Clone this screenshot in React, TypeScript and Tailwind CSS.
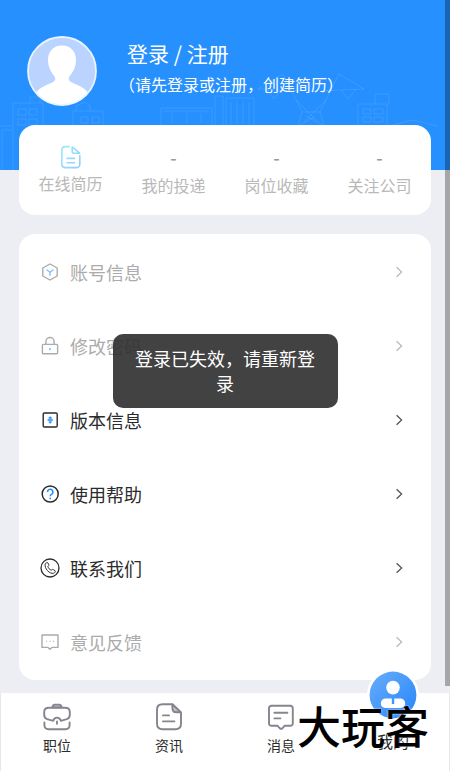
import type { ReactNode } from 'react'
import { clsx } from 'clsx'

interface MenuItem {
  label: string
  icon: ReactNode
  disabled?: boolean
}

interface TabItem {
  label: string
  icon: ReactNode
}

/* ---------- Icons ---------- */

function AccountIcon() {
  return (
    <svg viewBox="0 0 20 20" fill="none" className="w-5 h-5" aria-hidden="true">
      <path d="M10 2 17.2 6V14L10 18 2.8 14V6Z" stroke="currentColor" strokeWidth="1.4" strokeLinejoin="round" />
      <path d="M7 8 10 10.2 13 8M10 10.2V13.2" stroke="#7fbdff" strokeWidth="1.4" strokeLinecap="round" />
    </svg>
  )
}

function LockIcon() {
  return (
    <svg viewBox="0 0 20 20" fill="none" className="w-5 h-5" aria-hidden="true">
      <rect x="2.4" y="8.4" width="15.2" height="9.4" rx="1" stroke="currentColor" strokeWidth="1.4" />
      <path d="M5.9 8.2V5.6a4.1 4.1 0 0 1 8.2 0V8.2" stroke="currentColor" strokeWidth="1.4" />
      <path d="M10 12V14.2" stroke="#7fbdff" strokeWidth="1.6" />
    </svg>
  )
}

function VersionIcon() {
  return (
    <svg viewBox="0 0 20 20" fill="none" className="w-5 h-5" aria-hidden="true">
      <rect x="3.2" y="3" width="14" height="14" rx="1.2" stroke="currentColor" strokeWidth="1.4" />
      <path d="M7.6 10H12.8" stroke="#2690ff" strokeWidth="1.6" />
      <path d="M10.2 6.6V8.8M8.6 8H11.8M10.2 11.2V13.4M8.8 12H11.6" stroke="#2690ff" strokeWidth="1.3" />
    </svg>
  )
}

function HelpIcon() {
  return (
    <svg viewBox="0 0 20 20" fill="none" className="w-5 h-5" aria-hidden="true">
      <circle cx="10.2" cy="10" r="8" stroke="currentColor" strokeWidth="1.5" />
      <path d="M7.5 7.9a2.7 2.7 0 1 1 4.3 2.2C10.8 10.8 10.2 11 10.2 12.2" stroke="#2690ff" strokeWidth="1.6" />
      <circle cx="10.2" cy="14.4" r="0.9" fill="#2690ff" />
    </svg>
  )
}

function PhoneIcon() {
  return (
    <svg viewBox="0 0 20 20" fill="none" className="w-5 h-5" aria-hidden="true">
      <circle cx="10" cy="10" r="9" stroke="currentColor" strokeWidth="1.3" />
      <path
        d="M5.2 6.2C5.8 4.8 7 4.2 7.8 4.8L8.8 6.6C9.1 7.4 8.4 8 7.9 8.5 8.2 10 9.8 11.8 11.3 12.2 11.9 11.6 12.6 11.2 13.3 11.6L15.1 12.8C15.7 13.6 14.8 14.9 13.6 15.3 9.6 16.2 4.2 10.4 5.2 6.2Z"
        stroke="currentColor"
        strokeWidth="1"
        strokeLinejoin="round"
      />
    </svg>
  )
}

function FeedbackIcon() {
  return (
    <svg viewBox="0 0 20 20" fill="none" className="w-5 h-5" aria-hidden="true">
      <path d="M2 3H18V15.4H12L10 17.2 8 15.4H2Z" stroke="currentColor" strokeWidth="1.4" strokeLinejoin="round" />
      <path d="M6 9.3H7.2M9.4 9.3H10.6M12.8 9.3H14" stroke="#a9c9ea" strokeWidth="1.2" />
    </svg>
  )
}

function ChevronIcon() {
  return (
    <svg viewBox="0 0 12 12" fill="none" className="w-3 h-3 opacity-80" aria-hidden="true">
      <path d="M3.6 1.2 8.6 6 3.6 10.8" stroke="currentColor" strokeWidth="1.3" />
    </svg>
  )
}

function ResumeIcon() {
  return (
    <svg viewBox="0 0 20 24" fill="none" className="w-5 h-6" aria-hidden="true">
      <defs>
        <linearGradient id="resume" x1="0" y1="0" x2="1" y2="1">
          <stop offset="0" stopColor="#98ebfb" />
          <stop offset="1" stopColor="#94caff" />
        </linearGradient>
      </defs>
      <g stroke="url(#resume)" strokeWidth="1.6" strokeLinecap="round" strokeLinejoin="round">
        <path d="M8 1.6H4A3.4 3.4 0 0 0 .8 5V19.2A3.4 3.4 0 0 0 4 22.6H15.4A3.4 3.4 0 0 0 18.8 19.2V10.6" />
        <path d="M11.2 1.8V6.2A2 2 0 0 0 13.2 8.2H18.6ZM6 13.4H13.4M6 17.8H13.4" />
      </g>
    </svg>
  )
}

function BriefcaseIcon() {
  return (
    <svg viewBox="0 0 28 28" fill="none" className="w-7 h-7" aria-hidden="true">
      <g stroke="#85858f" strokeWidth="1.9" strokeLinecap="round" strokeLinejoin="round">
        <path d="M9.4 4.4C9.6 2.4 10.2 1.6 11.8 1.6H16.2C17.8 1.6 18.4 2.4 18.6 4.4Z" fill="#c4c4ca" />
        <path d="M6 4.8H22C25.4 4.8 26.8 6.2 26.8 9V11.8C26.8 14.6 25.8 15.6 23.8 16.2L17.8 17.8C17.2 15.6 15.8 14.6 14 14.6S10.8 15.6 10.2 17.8L4.2 16.2C2.2 15.6 1.2 14.6 1.2 11.8V9C1.2 6.2 2.6 4.8 6 4.8Z" />
        <path d="M14 18.4V20.8M1.4 19.4V22C1.4 24.8 3 26.2 5.6 26.2H22.4C25 26.2 26.6 24.8 26.6 22V19.4" />
      </g>
    </svg>
  )
}

function NewsIcon() {
  return (
    <svg viewBox="0 0 28 28" fill="none" className="w-7 h-7" aria-hidden="true">
      <g stroke="#85858f" strokeWidth="1.9" strokeLinecap="round" strokeLinejoin="round">
        <path d="M17.4 1.2H7.6C4.2 1.2 2 3.2 2 6.6V20.8C2 24.2 4.2 26.2 7.6 26.2H20.4C23.8 26.2 26 24.2 26 20.8V9.4Z" />
        <path d="M17.4 1.4V5.2C17.4 7.8 18.6 9.2 21.2 9.2H25.6Z" fill="#c4c4ca" />
        <path d="M8 12.4H14M8 18.4H19.4" />
      </g>
    </svg>
  )
}

function MessageIcon() {
  return (
    <svg viewBox="0 0 28 28" fill="none" className="w-7 h-7" aria-hidden="true">
      <g stroke="#85858f" strokeWidth="1.9" strokeLinecap="round" strokeLinejoin="round">
        <path d="M4.4 2.8H23.4A2.4 2.4 0 0 1 25.8 5.2V20.4A2.4 2.4 0 0 1 23.4 22.8H17.6L14.8 25.8H13.4L10.6 22.8H4.4A2.4 2.4 0 0 1 2 20.4V5.2A2.4 2.4 0 0 1 4.4 2.8Z" />
        <path d="M7.4 9.8H20.4M7.4 15.4H13.4" />
      </g>
    </svg>
  )
}

function ProfileIcon() {
  return (
    <svg viewBox="0 0 52 52" className="w-[52px] h-[52px]" aria-hidden="true">
      <defs>
        <linearGradient id="profile" x1="0" y1="0" x2="1" y2="1">
          <stop offset="0" stopColor="#69adfb" />
          <stop offset="1" stopColor="#2585fb" />
        </linearGradient>
      </defs>
      <circle cx="26" cy="26" r="26" fill="#fff" />
      <circle cx="26" cy="26" r="23.4" fill="url(#profile)" />
      <circle cx="26" cy="18.6" r="6.8" fill="#fff" />
      <path d="M19 29.4H24.8V35H27.2V29.4H33A5 5 0 0 1 38.2 34.6C38.2 37.4 36.4 39 33.6 39H18.4C15.6 39 13.8 37.4 13.8 34.6A5 5 0 0 1 19 29.4Z" fill="#fff" />
    </svg>
  )
}

function Avatar() {
  return (
    <svg viewBox="0 0 70 70" className="w-[70px] h-[70px] shrink-0" aria-hidden="true">
      <defs>
        <clipPath id="avatar">
          <circle cx="35" cy="35" r="34" />
        </clipPath>
      </defs>
      <circle cx="35" cy="35" r="34" fill="#bbd3ff" />
      <path
        clipPath="url(#avatar)"
        d="M35 9.4C44 9.4 49 15.6 49 24 49 31 46 36 42.4 40.4 40.8 43.6 42.2 45.2 45.4 46.8 53 50 58.4 52.4 62 58L50 72H20L8 58C11.6 52.4 17 50 24.6 46.8 27.8 45.2 29.2 43.6 27.6 40.4 24 36 21 31 21 24 21 15.6 26 9.4 35 9.4Z"
        fill="#fff"
      />
      <circle cx="35" cy="35" r="34" fill="none" stroke="#eaf4ff" strokeWidth="1.8" />
    </svg>
  )
}

/* Faint city outline along the bottom of the header */
function Skyline() {
  return (
    <svg viewBox="0 0 450 100" fill="none" className="absolute bottom-0 left-0 w-full" aria-hidden="true">
      <g stroke="#fff" strokeOpacity="0.1">
        <path d="M2 100V60H12M13 100V33H43V100M30 33V27H40V33M18 39H26V45H18ZM29 39H37V45H29ZM18 49H26V55H18ZM29 49H37V55H29Z" />
        <path d="M73 100V41H103V100M76 41V36L85 32 90 36V41M81 47H88V53H81ZM92 47H99V53H92Z" />
        <path d="M161 100V38H212V100M164 41H209M172 43V53M187 43V53M201 43V53M215 100V26H223V100" />
        <path d="M226 100V28H254V100M231 32V54M237 32V54M243 32V54M249 32V54" />
        <path d="M283 4 302 42 298 56M339 4 320 42 324 56M283 4 258 19 302 21M339 4 364 19 320 21M267 19 274 29 281 20M341 20 348 29 356 19" />
        <path d="M290 18 298 22M332 18 324 22M296 30 318 52M326 30 304 52M302 42H320M298 56 316 46M324 56 306 46" />
        <path d="M358 100V34H387V100M375 34V24H389V34M363 39H371V44H363ZM374 39H383V44H374ZM363 47H371V52H363ZM374 47H383V52H374Z" />
        <path d="M390 56 412 50 438 56M0 56H13M43 56H73M103 56H161M258 56H298M324 56H358" />
      </g>
    </svg>
  )
}

/* ---------- Data ---------- */

const stats = ['我的投递', '岗位收藏', '关注公司']

const menu: MenuItem[] = [
  { label: '账号信息', icon: <AccountIcon />, disabled: true },
  { label: '修改密码', icon: <LockIcon />, disabled: true },
  { label: '版本信息', icon: <VersionIcon /> },
  { label: '使用帮助', icon: <HelpIcon /> },
  { label: '联系我们', icon: <PhoneIcon /> },
  { label: '意见反馈', icon: <FeedbackIcon />, disabled: true },
]

const tabs: TabItem[] = [
  { label: '职位', icon: <BriefcaseIcon /> },
  { label: '资讯', icon: <NewsIcon /> },
  { label: '消息', icon: <MessageIcon /> },
]

export default function App() {
  return (
    <div className="relative min-h-screen flex flex-col bg-[#edeef4] font-['Noto_Sans_CJK_SC',sans-serif] text-[#2b2b2b]">
      {/* Header */}
      <header className="relative bg-[#2690ff] text-white pt-9 pb-16 px-[27px]">
        <Skyline />
        <div className="relative flex items-start gap-[22px]">
          <Avatar />
          <div className="flex flex-col">
            <button type="button" className="pl-2 text-left text-[21px] leading-[34px]">
              登录 / 注册
            </button>
            <p className="text-base leading-7 whitespace-nowrap">（请先登录或注册，创建简历）</p>
          </div>
        </div>
      </header>

      <main className="relative grow flex flex-col gap-[19px] px-[19px] pb-[13px] -mt-[45px]">
        {/* Resume and counters */}
        <section className="grid grid-cols-4 bg-white rounded-2xl pt-5 pb-[18px] text-base text-[#b8b8b8]">
          <button type="button" className="flex flex-col items-center gap-0.5">
            <ResumeIcon />
            <span className="leading-6">在线简历</span>
          </button>
          {stats.map((label) => (
            <button key={label} type="button" className="flex flex-col items-center gap-1">
              <span className="text-lg leading-6 font-medium text-[#999]">-</span>
              <span className="leading-6">{label}</span>
            </button>
          ))}
        </section>

        {/* Settings menu */}
        <ul className="bg-white rounded-2xl py-px">
          {menu.map((item) => (
            <li key={item.label}>
              <button
                type="button"
                disabled={item.disabled}
                className={clsx(
                  'w-full h-[74px] flex items-center gap-2.5 pl-[21px] pr-[26px] text-lg',
                  item.disabled ? 'text-[#ababab]' : 'text-[#2b2b2b]'
                )}
              >
                {item.icon}
                <span className="grow text-left">{item.label}</span>
                <ChevronIcon />
              </button>
            </li>
          ))}
        </ul>
      </main>

      {/* Tab bar */}
      <nav className="relative grid grid-cols-4 h-[78px] bg-white border-x border-[#e6e7ec]">
        {tabs.map((tab) => (
          <a key={tab.label} href="#" className="flex flex-col items-center pt-2.5 gap-1">
            {tab.icon}
            <span className="text-sm leading-5">{tab.label}</span>
          </a>
        ))}
        <a href="#" aria-current="page" className="flex flex-col items-center gap-2 -mt-6">
          <ProfileIcon />
          <span className="text-base leading-6">我的</span>
        </a>
        <div className="absolute right-5 top-2.5 text-[44px] leading-[44px] font-medium text-black whitespace-nowrap pointer-events-none [text-shadow:0_0_2px_#fff]">
          大玩客
        </div>
      </nav>

      {/* Toast */}
      <div
        role="status"
        className="absolute top-[334px] left-1/4 w-1/2 rounded-[10px] bg-[#2e2e2e]/90 px-5 py-3 text-center text-lg leading-[25px] text-white"
      >
        登录已失效，请重新登录
      </div>

      {/* Scrollbar thumb */}
      <div className="absolute top-0 right-0 bottom-[85px] w-[5px] bg-black/30" />
    </div>
  )
}
